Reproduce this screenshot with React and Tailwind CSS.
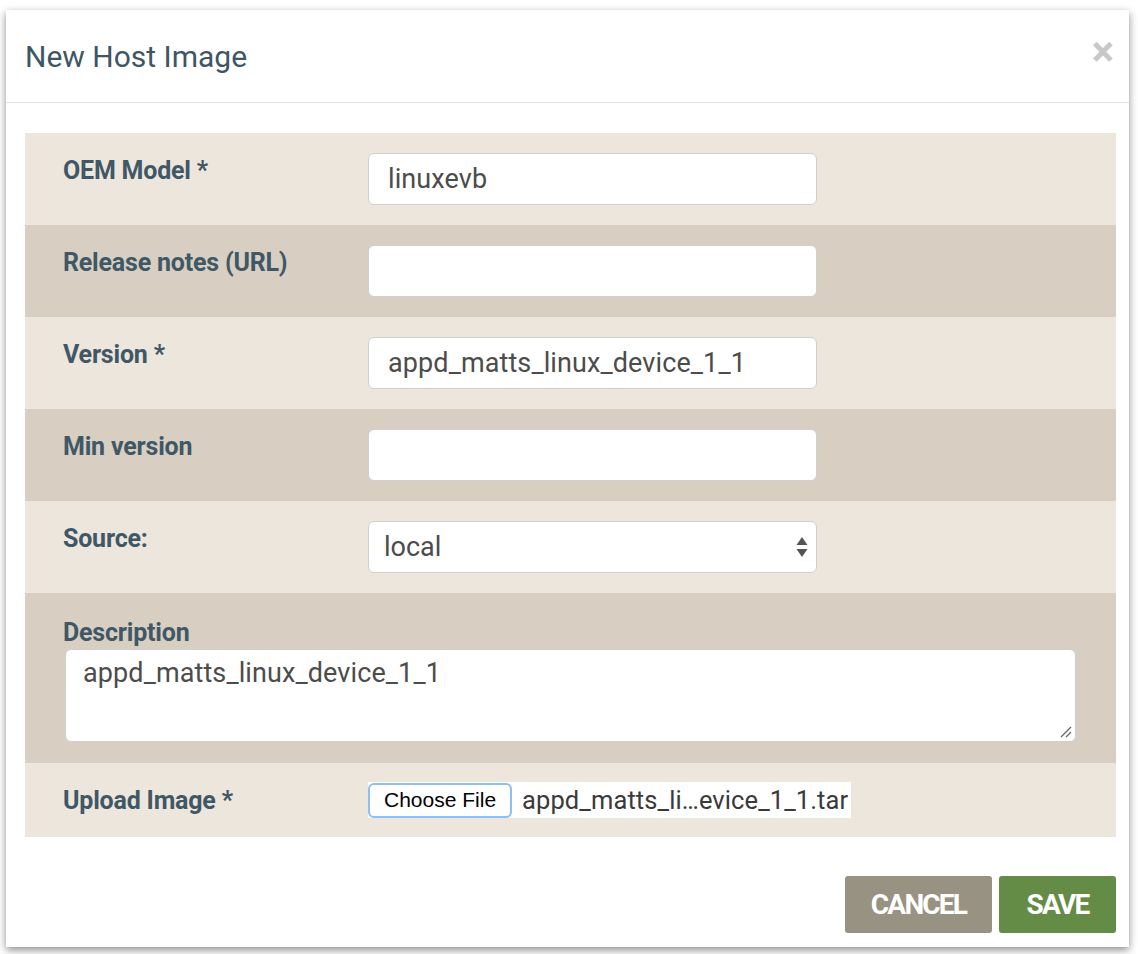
import React from "react";

const font = { fontFamily: "Roboto, 'Liberation Sans', sans-serif" };

function Row({ label, dark, children }) {
  return (
    <div className={`flex items-start pl-[38px] pt-[20px] pb-[20px] ${dark ? "bg-[#d8cfc2]" : "bg-[#ede6dd]"}`}>
      <div className="w-[305px] shrink-0 pt-[3px] text-[25px] font-bold leading-[30px] tracking-[-0.2px] text-[#405866]">{label}</div>
      {children}
    </div>
  );
}

function TextBox({ value }) {
  return (
    <div className="flex h-[52px] w-[449px] items-center rounded-[6px] border border-[#cfcfcf] bg-white px-[19px] text-[27px] tracking-[0.1px] text-[#4c4c4c]">
      {value}
    </div>
  );
}

export default function App() {
  return (
    <div className="h-[954px] w-[1138px] bg-white pl-[6px] pt-[10px]" style={font}>
      <div className="flex h-[937px] w-[1123px] flex-col bg-white shadow-[0_3px_8px_rgba(0,0,0,0.45)]">
        <div className="flex h-[93px] items-center justify-between border-b border-[#e3e3e3] pl-[19px] pr-[15px]">
          <h1 className="text-[30px] font-normal text-[#3e5664]">New Host Image</h1>
          <span className="-mt-[8px] text-[42px] font-bold leading-none text-[#c8c8c8]">×</span>
        </div>

        <div className="mt-[30px] ml-[19px] mr-[13px] flex flex-col">
          <Row label="OEM Model *">
            <TextBox value="linuxevb" />
          </Row>
          <Row label="Release notes (URL)" dark>
            <TextBox value="" />
          </Row>
          <Row label="Version *">
            <TextBox value="appd_matts_linux_device_1_1" />
          </Row>
          <Row label="Min version" dark>
            <TextBox value="" />
          </Row>
          <Row label="Source:">
            <div className="flex h-[52px] w-[449px] items-center justify-between rounded-[6px] border border-[#cfcfcf] bg-white pl-[15px] pr-[8px] text-[27px] text-[#4c4c4c]">
              <span>local</span>
              <svg width="12" height="22" viewBox="0 0 12 22">
                <path d="M6 1 L11.5 9 L0.5 9 Z" fill="#555" />
                <path d="M0.5 13 L11.5 13 L6 21 Z" fill="#555" />
              </svg>
            </div>
          </Row>

          <div className="flex flex-col bg-[#d8cfc2] pl-[38px] pr-[40px] pt-[25px] pb-[21px]">
            <div className="text-[25px] font-bold leading-[30px] tracking-[-0.2px] text-[#405866]">Description</div>
            <div className="relative mt-[1px] ml-[2px] h-[93px] rounded-[6px] border border-[#cfcfcf] bg-white px-[17px] pt-[7px] text-[27px] leading-[32px] tracking-[0.1px] text-[#4c4c4c]">
              appd_matts_linux_device_1_1
              <svg className="absolute bottom-[3px] right-[3px]" width="12" height="12" viewBox="0 0 12 12">
                <path d="M1 11 L11 1 M6 11 L11 6" stroke="#666" strokeWidth="1.3" />
              </svg>
            </div>
          </div>

          <div className="flex h-[74px] items-center bg-[#ede6dd] pl-[38px]">
            <div className="w-[305px] shrink-0 pt-[2px] text-[25px] font-bold leading-[30px] tracking-[-0.2px] text-[#405866]">Upload Image *</div>
            <div className="flex h-[36px] items-center bg-white pr-[3px]">
              <div
                className="flex h-[35px] items-center rounded-[6px] border-2 border-[#8fbef0] bg-white px-[14px] text-[21px] text-black"
                style={{ fontFamily: "'Liberation Sans', Arial, sans-serif" }}
              >
                Choose File
              </div>
              <span className="ml-[10px] text-[25.5px] tracking-[0.1px] text-[#3a3a3a]">appd_matts_li…evice_1_1.tar</span>
            </div>
          </div>
        </div>

        <div className="mt-[39px] mr-[13px] flex justify-end gap-[7px]">
          <button className="flex h-[57px] w-[147px] items-center justify-center rounded-[3px] bg-[#979282] text-[28px] font-bold tracking-[-1.8px] text-white">
            CANCEL
          </button>
          <button className="flex h-[57px] w-[117px] items-center justify-center rounded-[3px] bg-[#658c46] text-[28px] font-bold tracking-[-1.8px] text-white">
            SAVE
          </button>
        </div>
      </div>
    </div>
  );
}
